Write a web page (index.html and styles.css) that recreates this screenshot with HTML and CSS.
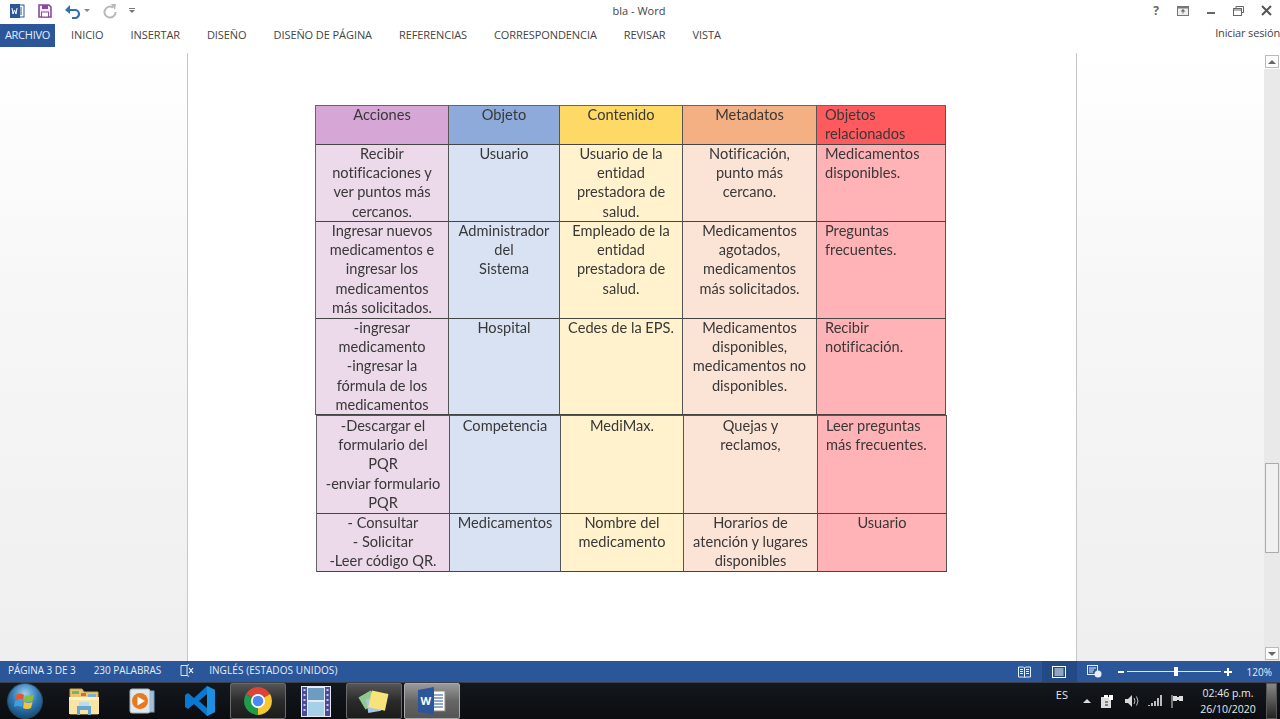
FILE: index.html
```html
<!DOCTYPE html>
<html lang="es">
<head>
<meta charset="utf-8">
<title>bla - Word</title>
<link rel="stylesheet" href="styles.css">
</head>
<body>
<div class="app">
  <header class="titlebar">
    <div class="qat">
      <svg class="ic-word" width="16" height="16" viewBox="0 0 16 16"><rect x="6" y="2" width="9" height="12" fill="#fff" stroke="#2b579a"/><path d="M9 5h4M9 7h4M9 9h4M9 11h4" stroke="#2b579a"/><rect x="1" y="1" width="10" height="14" fill="#2b579a"/><path d="M3 5l1 6 1.5-4 1.5 4 1-6" fill="none" stroke="#fff" stroke-width="1"/></svg>
      <svg class="ic-save" width="16" height="16" viewBox="0 0 16 16"><path d="M2 2h10l2 2v10H2z" fill="#f4eef8" stroke="#8a4a9e" stroke-width="1.6"/><rect x="5" y="2" width="6" height="4" fill="#8a4a9e"/><rect x="4.5" y="9" width="7" height="5" fill="#fff" stroke="#8a4a9e"/></svg>
      <svg width="18" height="16" viewBox="0 0 18 16"><path d="M4 7h7a3.500 3.500 0 0 1 0 8H8" fill="none" stroke="#2f6fb4" stroke-width="2.200"/><path d="M1 7l5-5v9z" fill="#2f6fb4"/></svg>
      <span class="caret"></span>
      <svg class="redo" width="16" height="16" viewBox="0 0 16 16"><path d="M11 4.500a5.500 5.500 0 1 0 2.500 4.500" fill="none" stroke="#b8b8b8" stroke-width="2"/><path d="M9 1l5 0-1 6z" fill="#b8b8b8"/></svg>
      <span class="customize"></span>
    </div>
    <div class="doc-title">bla - Word</div>
    <div class="winbtns">
      <span class="help">?</span>
      <svg width="12" height="10" viewBox="0 0 12 10"><rect x=".5" y=".5" width="11" height="9" fill="#eee" stroke="#777"/><path d="M1 1.500h10" stroke="#777" stroke-width="2"/><path d="M6 3l2.500 2.500h-5zM5.500 5h1v2.500h-1z" fill="#666"/></svg>
      <svg width="10" height="10" viewBox="0 0 10 10"><path d="M1 7h8" stroke="#666" stroke-width="2"/></svg>
      <svg width="11" height="10" viewBox="0 0 11 10"><path d="M3 2.500V.5h7.500v6h-2" fill="none" stroke="#666"/><rect x=".5" y="2.500" width="8" height="7" fill="#fff" stroke="#666"/><path d="M1 4h7" stroke="#666"/></svg>
      <svg width="11" height="11" viewBox="0 0 11 11"><path d="M1 1l9 9M10 1l-9 9" stroke="#555" stroke-width="2"/></svg>
    </div>
  </header>
  <nav class="tabs">
    <a class="tab file">ARCHIVO</a>
    <a class="tab t1">INICIO</a>
    <a class="tab">INSERTAR</a>
    <a class="tab">DISEÑO</a>
    <a class="tab">DISEÑO DE PÁGINA</a>
    <a class="tab">REFERENCIAS</a>
    <a class="tab">CORRESPONDENCIA</a>
    <a class="tab">REVISAR</a>
    <a class="tab">VISTA</a>
    <span class="signin">Iniciar sesión</span>
  </nav>
  <main class="workspace">
    <div class="canvas">
      <section class="page">
        <div class="tbl first">
          <div class="c h a">Acciones</div><div class="c h b">Objeto</div><div class="c h d">Contenido</div><div class="c h e">Metadatos</div><div class="c h f l">Objetos relacionados</div>
          <div class="c a2">Recibir<br>notificaciones y<br>ver puntos más<br>cercanos.</div><div class="c b2">Usuario</div><div class="c d2">Usuario de la<br>entidad<br>prestadora de<br>salud.</div><div class="c e2">Notificación,<br>punto más<br>cercano.</div><div class="c f2 l">Medicamentos<br>disponibles.</div>
          <div class="c a2">Ingresar nuevos<br>medicamentos e<br>ingresar los<br>medicamentos<br>más solicitados.</div><div class="c b2">Administrador<br>del<br>Sistema</div><div class="c d2">Empleado de la<br>entidad<br>prestadora de<br>salud.</div><div class="c e2">Medicamentos<br>agotados,<br>medicamentos<br>más solicitados.</div><div class="c f2 l">Preguntas<br>frecuentes.</div>
          <div class="c a2">-ingresar<br>medicamento<br>-ingresar la<br>fórmula de los<br>medicamentos</div><div class="c b2">Hospital</div><div class="c d2">Cedes de la EPS.</div><div class="c e2">Medicamentos<br>disponibles,<br>medicamentos no<br>disponibles.</div><div class="c f2 l">Recibir<br>notificación.</div>
        </div>
        <div class="tbl second">
          <div class="c a2">-Descargar el<br>formulario del<br>PQR<br>-enviar formulario<br>PQR</div><div class="c b2">Competencia</div><div class="c d2">MediMax.</div><div class="c e2">Quejas y<br>reclamos,</div><div class="c f2 l">Leer preguntas<br>más frecuentes.</div>
          <div class="c a2 up1">- Consultar<br>- Solicitar<br>-Leer código QR.</div><div class="c b2 up1">Medicamentos</div><div class="c d2 up1">Nombre del<br>medicamento</div><div class="c e2 up1">Horarios de<br>atención y lugares<br>disponibles</div><div class="c f2 up1">Usuario</div>
        </div>
      </section>
    </div>
    <aside class="scrollbar">
      <span class="sbtn"><i class="up"></i></span>
      <span class="track"><span class="thumb"></span></span>
      <span class="sbtn"><i class="down"></i></span>
    </aside>
  </main>
  <footer class="status">
    <span class="st s1">PÁGINA 3 DE 3</span>
    <span class="st s2">230 PALABRAS</span>
    <svg class="proof" width="14" height="13" viewBox="0 0 14 13"><path d="M1 1.500h6v10H1zM7 1.500l2-1M7 11.500l2 1" fill="none" stroke="#dfe7f3"/><path d="M9 4l4 5M13 4l-4 5" stroke="#fff" stroke-width="1.200"/></svg>
    <span class="st s3">INGLÉS (ESTADOS UNIDOS)</span>
    <div class="st-right">
      <span class="view"><svg width="13" height="12" viewBox="0 0 13 12"><path d="M.5 1h5l1 1 1-1h5v10h-5l-1 1-1-1h-5z" fill="none" stroke="#e8eef7"/><path d="M6.500 2v9M2 3.500h3M2 5.500h3M2 7.500h3M8 3.500h3M8 5.500h3M8 7.500h3" stroke="#e8eef7"/></svg></span>
      <span class="view on"><svg width="14" height="12" viewBox="0 0 14 12"><rect x=".5" y=".5" width="13" height="11" fill="none" stroke="#fff"/><path d="M2.500 3h9M2.500 5h9M2.500 7h9M2.500 9h9" stroke="#fff"/></svg></span>
      <span class="view"><svg width="15" height="13" viewBox="0 0 15 13"><rect x=".5" y=".5" width="10" height="9" fill="none" stroke="#e8eef7"/><path d="M2 3h7M2 5h5M2 7h4" stroke="#e8eef7"/><circle cx="11" cy="9" r="3.500" fill="#e8eef7"/></svg></span>
      <span class="zoom-minus"></span>
      <span class="slider"><i class="knob"></i></span>
      <span class="zoom-plus"></span>
      <span class="pct">120%</span>
    </div>
  </footer>
  <div class="taskbar">
    <span class="start"><svg width="36" height="36" viewBox="0 0 36 36"><defs><radialGradient id="orb" cx=".5" cy=".3" r=".75"><stop offset="0" stop-color="#9fd0ee"/><stop offset=".5" stop-color="#2f7ab5"/><stop offset="1" stop-color="#123f63"/></radialGradient></defs><circle cx="18" cy="18" r="17.500" fill="url(#orb)" stroke="#2d4a60"/><path d="M9 12q4-3 8 0l-1 5q-4-2-8 0z" fill="#e4572e"/><path d="M18 12q4 2 9 0l-1.500 6q-4 2-8.500 0z" fill="#8bbd3f"/><path d="M8 18q4-2 8 0l-1 6q-4-2-8 0z" fill="#3f9fe0"/><path d="M17 19q4 2 8.500 0l-1.500 6q-4 2-8 0z" fill="#f5c33b"/></svg></span>
    <span class="tb"><svg width="32" height="30" viewBox="0 0 32 30"><path d="M2 3h12l2 3h14v22H2z" fill="#e9c670" stroke="#c9a654"/><rect x="4" y="5" width="7" height="3" fill="#7fb069"/><rect x="13" y="7" width="5" height="3" fill="#d8664a"/><rect x="20" y="8" width="8" height="3" fill="#7fb3cc"/><path d="M1 11h30v17H1z" fill="#f8e5a6"/><path d="M1 11h30v3H1z" fill="#fbf0c8"/><path d="M9 20h14v9H20v-5h-8v5H9z" fill="#69a6cf"/><rect x="11" y="16" width="10" height="4" fill="#b6dcee"/></svg></span>
    <span class="tb"><svg width="26" height="26" viewBox="0 0 26 26"><rect x="6" y="3" width="19" height="21" fill="#9fc0de" stroke="#7f9fc0"/><rect x="1" y="1" width="20" height="24" rx="2" fill="#dfe8ee" stroke="#a8b4c0"/><circle cx="11" cy="13" r="8" fill="#e8791e"/><path d="M8.500 8.500l7.500 4.500-7.500 4.500z" fill="#fff"/></svg></span>
    <span class="tb"><svg width="32" height="32" viewBox="0 0 32 32"><path d="M23 1l8 4v22l-8 4-13-12-6 5-3-2v-12l3-2 6 5zM23 9l-8 7 8 7z" fill="#0a78d0"/><path d="M23 1l8 4v22l-8 4z" fill="#1c90e0"/></svg></span>
    <span class="tb act"><svg width="30" height="30" viewBox="0 0 30 30"><path d="M15 15L2.900 8A14 14 0 0 1 27.100 8z" fill="#dd4437"/><path d="M15 15L2.900 8A14 14 0 0 0 15 29z" fill="#1e9c4a"/><path d="M15 15L27.100 8A14 14 0 0 1 15 29z" fill="#f8c630"/><circle cx="15" cy="15" r="7" fill="#fff"/><circle cx="15" cy="15" r="5.300" fill="#4a8af0"/></svg></span>
    <span class="tb"><svg width="30" height="31" viewBox="0 0 30 31"><rect width="30" height="31" fill="#e8e8f6"/><rect x="1" y="1" width="5" height="29" fill="#4a4c9a"/><rect x="24" y="1" width="5" height="29" fill="#4a4c9a"/><path d="M2.500 4h2M2.500 9h2M2.500 14h2M2.500 19h2M2.500 24h2M25.500 4h2M25.500 9h2M25.500 14h2M25.500 19h2M25.500 24h2" stroke="#c8c8ea" stroke-width="2"/><rect x="7" y="2" width="16" height="12" fill="#6c9dc0"/><rect x="7" y="16" width="16" height="14" fill="#a6cfe8"/></svg></span>
    <span class="tb act"><svg width="32" height="30" viewBox="0 0 32 30"><rect x="3" y="7" width="14" height="14" fill="#8fc98f" transform="rotate(-30 10 14)"/><rect x="9" y="12" width="13" height="14" fill="#a8c4e8" transform="rotate(-10 15 19)"/><rect x="12" y="6" width="17" height="17" fill="#f8e27a" transform="rotate(12 20 14)"/></svg></span>
    <span class="tb act cur"><svg width="30" height="28" viewBox="0 0 30 28"><rect x="12" y="4" width="16" height="20" fill="#fff" stroke="#888"/><path d="M17 8h9M17 11h9M17 14h9M17 17h9M17 20h9" stroke="#2b579a"/><path d="M1 3l16-3v28L1 25z" fill="#2b579a"/><text class="wglyph" x="3.500" y="18">W</text></svg></span>
    <div class="tray">
      <span class="lang">ES</span>
      <span class="tri"></span>
      <svg class="clip" width="14" height="15" viewBox="0 0 14 15"><rect x="1" y="3" width="10" height="11" fill="#ddd"/><rect x="4" y="1" width="4" height="3" fill="#fff"/><path d="M5 8h3M5 11h3" stroke="#222"/><path d="M9 1h4v5H9z" fill="#fff"/></svg>
      <svg width="16" height="14" viewBox="0 0 16 14"><path d="M1 5h3l4-4v12l-4-4H1z" fill="#d8d8d8"/><path d="M10 4q2 3 0 6M12.500 2.500q3 4.500 0 9" fill="none" stroke="#bbb"/></svg>
      <svg width="14" height="12" viewBox="0 0 14 12"><path d="M1 10v1M4 8v3M7 6v5M10 3v8M13 0v11" stroke="#e6e6e6" stroke-width="1.600"/></svg>
      <svg width="14" height="14" viewBox="0 0 14 14"><path d="M2 1v13" stroke="#ddd"/><path d="M3 2h4v1h2V2h4v5H9V6H7v1H3z" fill="#ddd"/></svg>
      <span class="clock"><span>02:46 p.m.</span><span>26/10/2020</span></span>
      <span class="show-desktop"></span>
    </div>
  </div>
</div>
</body>
</html>
```
FILE: styles.css
```css
* { box-sizing: border-box; }
html, body { margin: 0; padding: 0; height: 100%; overflow: hidden; }
body { font-family: "Open Sans", "Liberation Sans", sans-serif; background: #fff; color: #444; }
.app { width: 1280px; height: 719px; display: flex; flex-direction: column; }

.titlebar { height: 24px; display: flex; align-items: center; position: relative; background: #fff; padding-bottom: 3px; }
.qat { display: flex; align-items: center; padding-left: 9px; }
.qat svg { margin-right: 12px; }
.qat .ic-save { margin-right: 11px; }
.caret { width: 0; height: 0; border: 3px solid transparent; border-top-color: #888; border-bottom: 0; margin: 0 12px 0 -10px; }
.qat .redo { margin-right: 11px; }
.customize { width: 6px; height: 5px; border-top: 1px solid #777; position: relative; }
.customize::after { content: ""; position: absolute; top: 1px; left: 0; border: 3px solid transparent; border-top-color: #777; border-bottom: 0; }
.doc-title { position: absolute; left: 0; right: 2px; text-align: center; font-size: 11px; color: #444; top: 3px; }
.winbtns { margin-left: auto; display: flex; align-items: center; gap: 17px; padding-right: 8px; }
.help { font-weight: 700; font-size: 12px; color: #666; margin-right: 1px; }

.tabs { height: 23px; display: flex; align-items: center; background: #fff; position: relative; padding-bottom: 2px; }
.tab { font-size: 11px; color: #444; white-space: nowrap; letter-spacing: -.08px; margin-left: 27px; }
.tab.file { width: 55px; height: 23px; margin: 0 0 -2px; background: #2b579a; color: #e8eef7; display: flex; align-items: center; justify-content: center; letter-spacing: -.25px; padding-bottom: 2px; }
.tab.t1 { margin-left: 16px; }
.signin { margin-left: auto; font-size: 11px; color: #444; margin-top: -5px; letter-spacing: -.15px; }

.workspace { flex: 1; min-height: 0; display: flex; margin-top: 6px; }
.canvas { flex: 1; background: linear-gradient(#fff 0, #f6f6f6 45%, #efefef 100%); padding-left: 187px; min-width: 0; }
.page { width: 890px; height: 100%; background: #fff; border-left: 1px solid #c6c6c6; border-right: 1px solid #c6c6c6; padding: 52px 0 0 127px; }
.tbl { display: grid; grid-template-columns: 133px 111px 123px 134px 129px; width: 631px; font-family: Lato, "Carlito", sans-serif; font-size: 14.6px; line-height: 19.2px; color: #383838; border-top: 1px solid #666; border-left: 1px solid #666; filter: blur(.35px); font-variant-ligatures: none; }
.first { grid-template-rows: 39px 77px 97px 96px; }
.second { grid-template-rows: 98px 58px; margin-left: 1px; border-top: 1px solid #555; }
.c { text-align: center; border-right: 1px solid #555; border-bottom: 1px solid #444; white-space: nowrap; min-width: 0; }
.first .c::before, .up1::before { content: ""; display: block; margin-top: -1px; }
.l { text-align: left; padding-left: 8px; }
.h { white-space: normal; }
.a { background: #d5a6d6; }
.b { background: #8eaadb; }
.d { background: #ffd966; }
.e { background: #f4b083; }
.f { background: #ff5b5f; line-height: 19px; }
.a2 { background: #ecd9ea; }
.b2 { background: #d9e2f3; }
.d2 { background: #fff2cc; }
.e2 { background: #fbe3d6; }
.f2 { background: #ffb3b6; }

.scrollbar { width: 16px; background: linear-gradient(#fff 0, #fff 16px, #e9e9e9 16px); display: flex; flex-direction: column; padding: 2px 1px 1px; }
.sbtn { height: 13px; background: #fdfdfd; border: 1px solid #bbb; display: flex; align-items: center; justify-content: center; flex: none; }
.up { border: 4px solid transparent; border-bottom-color: #666; border-top: 0; }
.down { border: 4px solid transparent; border-top-color: #666; border-bottom: 0; }
.track { flex: 1; padding-top: 395px; }
.thumb { display: block; height: 90px; background: #f0f0f0; border: 1px solid #ababab; }

.status { height: 22px; background: #2b579a; display: flex; align-items: center; color: #e6ecf6; font-size: 10px; letter-spacing: -.05px; border-bottom: 1px solid #3a3f4a; padding-bottom: 3px; }
.st { white-space: nowrap; }
.s1 { margin-left: 8px; }
.s2 { margin-left: 18px; }
.proof { margin-left: 19px; }
.s3 { margin-left: 15px; letter-spacing: .08px; }
.st-right { margin-left: auto; display: flex; align-items: center; height: 21px; margin-bottom: -3px; padding-right: 8px; }
.view { width: 35px; height: 21px; display: flex; align-items: center; justify-content: center; }
.on { background: #234a84; }
.zoom-minus { width: 6px; height: 2px; background: #fff; margin-left: 6px; }
.slider { width: 94px; height: 1px; background: #dfe7f3; position: relative; margin: 0 3px; }
.knob { position: absolute; left: 47px; top: -4px; width: 4px; height: 9px; background: #fff; }
.zoom-plus { width: 8px; height: 8px; margin-right: 15px; background: linear-gradient(#fff,#fff) center/8px 2px no-repeat, linear-gradient(#fff,#fff) center/2px 8px no-repeat; }
.pct { font-size: 10px; letter-spacing: 0; }

.taskbar { height: 36px; flex: none; background: linear-gradient(#14181d, #0a0c10); display: flex; align-items: center; position: relative; }
.start { width: 56px; display: flex; justify-content: center; padding-right: 6px; }
.tb { width: 56px; height: 36px; display: flex; align-items: center; justify-content: center; margin-right: 2px; flex: none; }
.act { background: linear-gradient(#555, #2a2a2a 50%, #1b1b1b); border: 1px solid #6a6a6a; border-radius: 2px; }
.cur { background: linear-gradient(#9a9a9a, #666 50%, #555); border-color: #aaa; }
.wglyph { font-family: "Open Sans", sans-serif; font-weight: 700; font-size: 11px; fill: #fff; }
.tray { margin-left: auto; display: flex; align-items: center; gap: 8px; color: #e4e4e4; height: 36px; padding-right: 3px; }
.lang { font-size: 11px; margin-right: 7px; margin-top: -13px; }
.tri { width: 0; height: 0; border: 4px solid transparent; border-bottom-color: #ddd; border-top: 0; margin-right: 1px; }
.clip { margin-right: 2px; }
.clock { display: flex; flex-direction: column; align-items: center; font-size: 10.5px; line-height: 16px; color: #e8e8e8; margin-left: 6px; width: 60px; }
.show-desktop { width: 11px; height: 36px; background: linear-gradient(#888, #222); border: 1px solid #555; }
```
